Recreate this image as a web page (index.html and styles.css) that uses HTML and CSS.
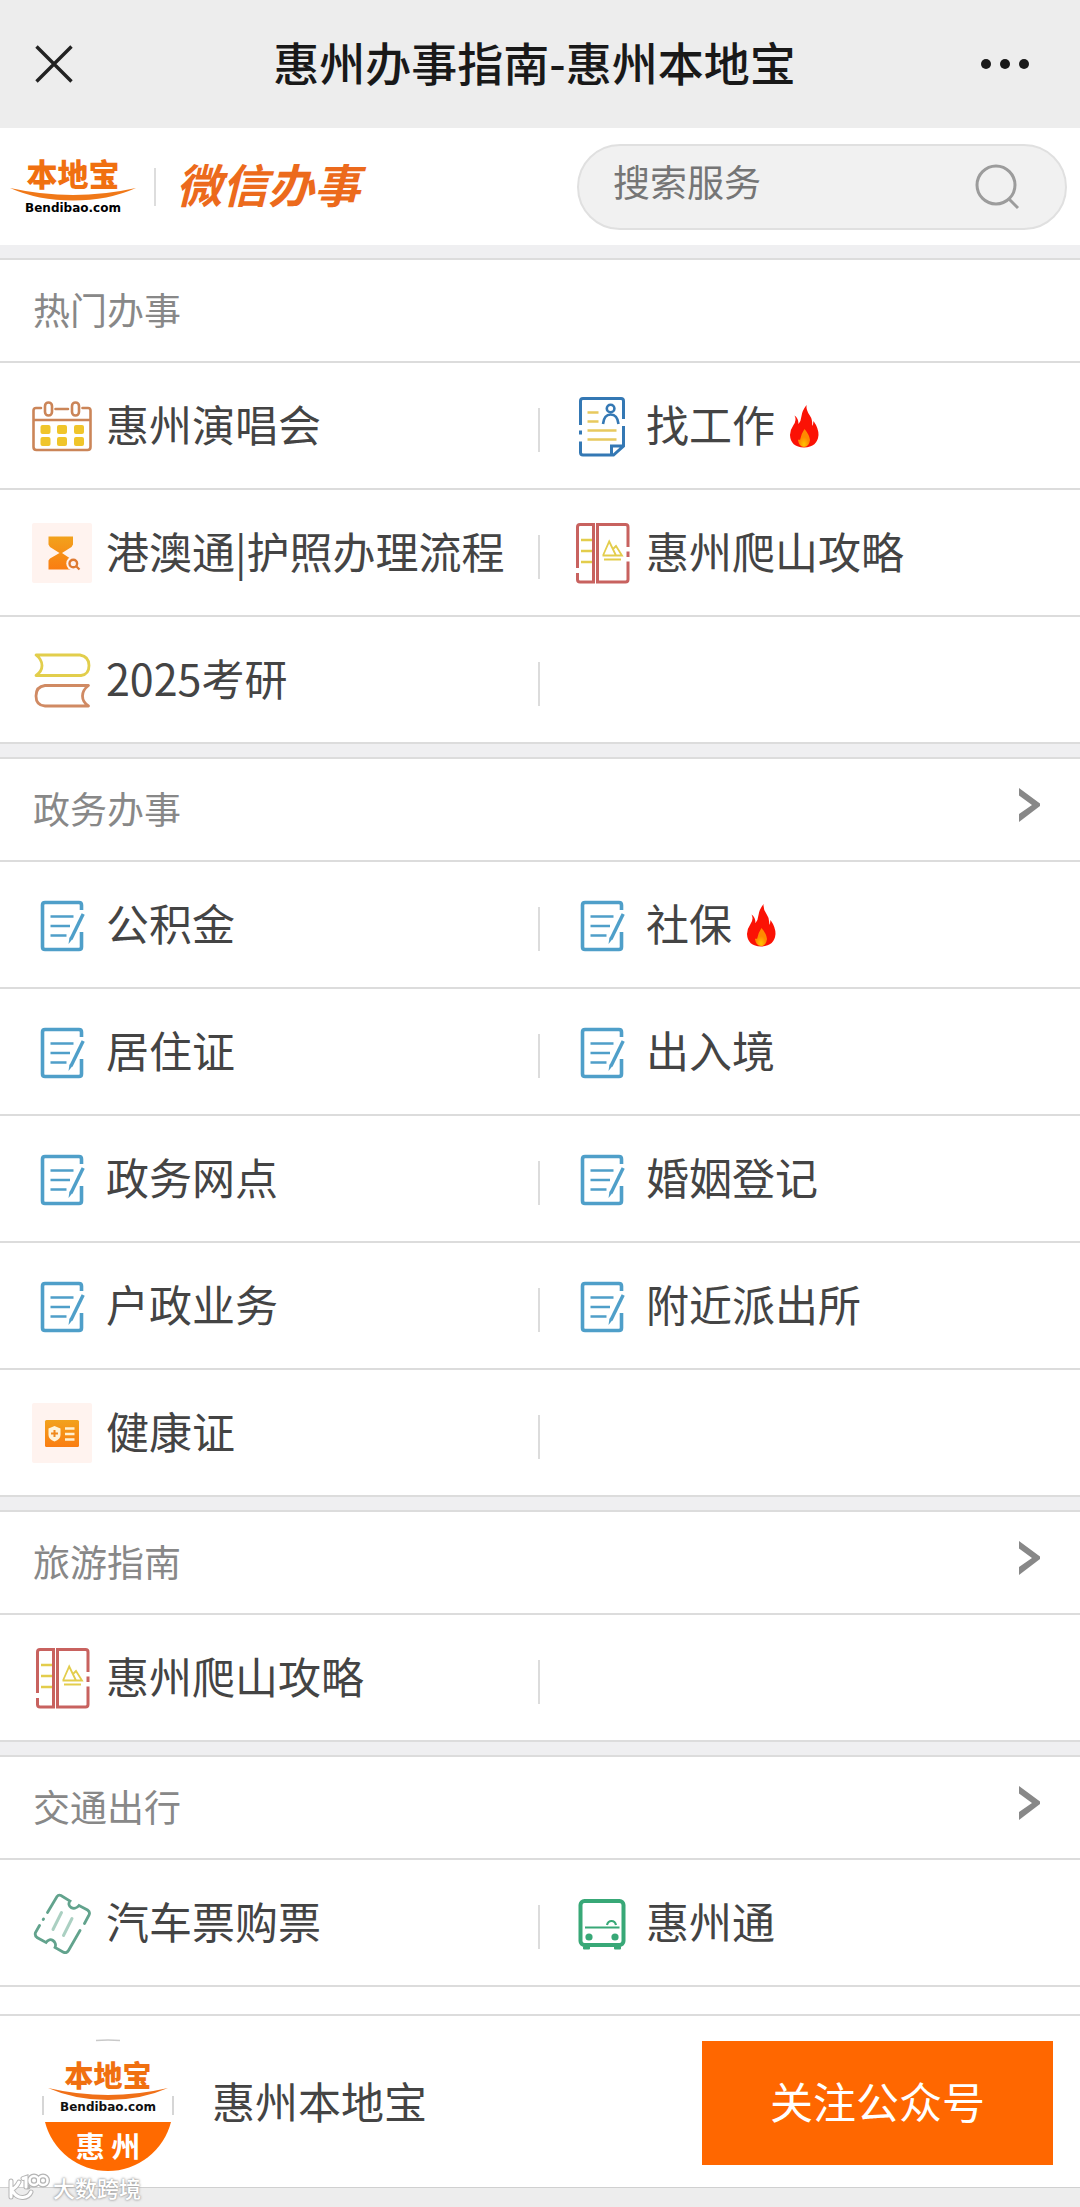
FILE: index.html
```html
<!DOCTYPE html>
<html lang="zh-CN">
<head>
<meta charset="utf-8">
<meta name="viewport" content="width=device-width">
<title>惠州办事指南-惠州本地宝</title>
<link rel="stylesheet" href="styles.css">
</head>
<body>
<svg class="defs" aria-hidden="true">
  <defs>
    <linearGradient id="amber" x1="0" y1="0" x2="0" y2="1">
      <stop offset="0" stop-color="#f2a21c"/>
      <stop offset="1" stop-color="#fa7d12"/>
    </linearGradient>
    <radialGradient id="flame" cx=".5" cy=".85" r=".4">
      <stop offset="0" stop-color="#ffc400"/>
      <stop offset="1" stop-color="#ff8a00"/>
    </radialGradient>
    <symbol id="i-calendar" viewBox="0 0 62 62">
      <g fill="none" stroke="#cb8558" stroke-width="2.6" stroke-linecap="round">
        <path d="M11 13H6q-2.500 0-2.500 2.500V52q0 3 3 3H57.500q3 0 3-3V15.500q0-2.500-2.500-2.500H52.500M25.500 14H38M3.500 25H60.500"/>
        <rect x="15" y="7.500" width="7" height="13" rx="3.500"/>
        <rect x="42" y="7.500" width="7" height="13" rx="3.500"/>
      </g>
      <g fill="#f0c52a">
        <rect x="10.500" y="30" width="10" height="9" rx="2"/><rect x="27" y="30" width="10" height="9" rx="2"/><rect x="44" y="30" width="10" height="9" rx="2"/>
        <rect x="10.500" y="42" width="10" height="9" rx="2"/><rect x="27" y="42" width="10" height="9" rx="2"/><rect x="44" y="42" width="10" height="9" rx="2"/>
      </g>
    </symbol>
    <symbol id="i-hourglass" viewBox="0 0 62 62">
      <rect x="2" y="1" width="60" height="60" rx="2" fill="#fff3ef"/>
      <path fill="url(#amber)" d="M18.500 14.500H43V22.500L41.500 25L32 31L41 37L43 39V47.500H18.500V38.500L20 36.500L29.500 31L20 25L18.500 22.500Z"/>
      <circle cx="43.300" cy="41.500" r="7" fill="#fff3ef"/>
      <circle cx="43.300" cy="41.500" r="3.800" fill="none" stroke="#de7a32" stroke-width="2.400"/>
      <path d="M46.500 44.500L49.500 47.500" stroke="#de7a32" stroke-width="2.200"/>
    </symbol>
    <symbol id="i-books" viewBox="0 0 62 62" fill="none" stroke-width="2.800" stroke-linejoin="round">
      <path stroke="#e2ce4c" d="M6 6H50Q59 7.500 59 16.500T51 26.500H6Q12 22.500 12 16.500T6 6Z"/>
      <path stroke="#d08a63" d="M58.500 36.500H15Q6 37.500 6 47T15 57H58.500Q52.500 53 52.500 47T58.500 36.500Z"/>
    </symbol>
    <symbol id="i-resume" viewBox="0 0 62 62" fill="none" stroke-width="3">
      <g stroke="#3478b4">
        <path d="M10.500 30V6Q10.500 3.500 13 3.500H51Q53.500 3.500 53.500 6V24M53.500 31V51L43.500 60H13Q10.500 60 10.500 57.500V46.500M10.500 35.500V39.500M41.500 60V51H53.500"/>
        <circle cx="40.600" cy="13.500" r="3.800" stroke-width="2.600"/>
        <path stroke-width="2.600" d="M33 29Q34 19.500 40.700 19.500T48.500 29"/>
      </g>
      <path stroke="#e8c95e" stroke-width="2.600" d="M17.500 17.500H28.500M17.500 26.500H28.500M17.500 35.500H46.500M17.500 44.500H46.500"/>
    </symbol>
    <symbol id="i-climb" viewBox="0 0 62 62" fill="none" stroke-width="3">
      <path stroke="#c8625f" d="M7.500 46V5Q7.500 2.500 10 2.500H23.500V60H10Q7.500 60 7.500 57.500V51M58 25V5Q58 2.500 55.500 2.500H27.500V60H55.500Q58 60 58 57.500V39.500M58 29.500V35"/>
      <path stroke="#e3cd4c" stroke-width="2.400" d="M11 18H22M11 29H22M11 40H22"/>
      <path stroke="#e3cd4c" stroke-width="1.800" d="M33 33.500L39.200 19.500L46 33.500M43 27L46 24L52 33.500H32.500M34 37.500H51"/>
    </symbol>
    <symbol id="i-note" viewBox="0 0 62 62" fill="none" stroke="#4f9fc9">
      <path stroke-width="3.600" d="M51.500 16V11Q51.500 8.500 49 8.500H15Q12.500 8.500 12.500 11V53Q12.500 55.500 15 55.500H49Q51.500 55.500 51.500 53V38"/>
      <path stroke-width="2.400" d="M20.500 22.500H43.500M20.500 32H40M20.500 41.500H36.500"/>
      <path stroke-width="3.400" d="M53.200 20L41 45"/>
      <path fill="#4f9fc9" stroke="none" d="M39.500 43.500L42.500 45L38.500 50Z"/>
    </symbol>
    <symbol id="i-health" viewBox="0 0 62 62">
      <rect x="2" y="1" width="60" height="60" rx="2" fill="#fff3ef"/>
      <rect x="15" y="18" width="34" height="27" rx="1.500" fill="url(#amber)"/>
      <path fill="#fff3d8" d="M24.500 24L30.500 26.500V33Q30.500 37 24.500 39.500Q18.500 37 18.500 33V26.500Z"/>
      <path stroke="#f08a1c" stroke-width="2" d="M24.500 28V35M21 31.500H28"/>
      <path stroke="#fff0d0" stroke-width="2.400" d="M35 26.500H44.500M35 32H44.500M35 37.500H44.500"/>
    </symbol>
    <symbol id="i-ticket" viewBox="0 0 62 62" fill="none" stroke-linecap="round">
      <path stroke="#62a38d" stroke-width="2.800" d="M17.500 20.500L27 4.500Q28.500 2.500 31 3.500L40 9C36 14 44 20 49 13.500L57.500 18Q60.500 20 59 23L54.500 31.500M50 38.500L38.500 58.500Q36.500 62 33 60L25 55.500C27.500 50 20 44 16 50.500L7 45.500Q4.500 43.500 5.500 40.500L9.500 33.500M13.200 27.500L13.500 27"/>
      <path stroke="#abd0c2" stroke-width="3" d="M31.500 20.500L23 37.500M42 26.500L33.500 43.500"/>
    </symbol>
    <symbol id="i-bus" viewBox="0 0 62 62" fill="none" stroke="#38a877">
      <rect x="10.500" y="9" width="43" height="44" rx="4" stroke-width="4"/>
      <path stroke-width="2.200" d="M15 35.500H49.500M37 33Q38 29 41.500 29T46 33"/>
      <g fill="#38a877" stroke="none"><circle cx="19" cy="45" r="3.600"/><circle cx="45" cy="45" r="3.600"/><rect x="13" y="54" width="7" height="3.500" rx="1"/><rect x="44" y="54" width="7" height="3.500" rx="1"/></g>
    </symbol>
    <symbol id="i-fire" viewBox="0 0 30 44">
      <path fill="#fb1205" d="M17.500 1Q17 6 20.500 11T23 22Q24.500 20 24.500 17Q29.500 24 29.500 31Q28.500 43 15 43.500Q1.500 43 1 31Q1 26 4.500 21T5.500 11.500Q9.500 14 9.500 20Q12 17 12.500 12T17.500 1Z"/>
      <path fill="url(#flame)" d="M15.500 25Q20.500 31 21 36Q20 43 15 43Q10 43 9 36Q10 35 11 36Q12 30 15.500 25Z"/>
    </symbol>
    <symbol id="i-chevron" viewBox="0 0 21 34"><path fill="#888" d="M0 0L21 15.500V18L0 34V26L13 17L0 7.500Z"/></symbol>
    <symbol id="i-swoosh" viewBox="0 0 126 13"><path fill="#f07818" d="M0 0Q63 14 126 0Q98 12.500 63 12.500T0 0Z"/></symbol>
  </defs>
</svg>

<header class="topbar">
  <button class="icon-btn" type="button" aria-label="关闭"><svg width="38" height="38" viewBox="0 0 38 38"><path d="M1.500 1.500L36.500 36.500M36.500 1.500L1.500 36.500" stroke="#222" stroke-width="3.400"/></svg></button>
  <h1 class="topbar-title">惠州办事指南-惠州本地宝</h1>
  <button class="icon-btn" type="button" aria-label="更多"><svg width="50" height="10" viewBox="0 0 50 10" fill="#191919"><circle cx="6" cy="5" r="5"/><circle cx="25" cy="5" r="5"/><circle cx="44" cy="5" r="5"/></svg></button>
</header>

<div class="brandbar">
  <a class="brand" href="#">
    <span class="brand-cn">本地宝</span>
    <svg class="brand-swoosh"><use href="#i-swoosh"/></svg>
    <span class="brand-en">Bendibao.com</span>
  </a>
  <span class="brand-slogan">微信办事</span>
  <form class="search">
    <input class="search-input" type="text" placeholder="搜索服务" aria-label="搜索服务">
    <button class="icon-btn" type="button" aria-label="搜索"><svg width="46" height="46" viewBox="0 0 46 46" fill="none" stroke="#9c9c9c" stroke-width="3"><circle cx="21" cy="21" r="19"/><path d="M34 35L43 44"/></svg></button>
  </form>
</div>

<main>
  <section class="section">
    <h2 class="section-head">热门办事</h2>
    <div class="grid">
      <a class="cell" href="#"><svg class="icon"><use href="#i-calendar"/></svg><span class="label">惠州演唱会</span></a>
      <a class="cell" href="#"><svg class="icon"><use href="#i-resume"/></svg><span class="label">找工作</span><svg class="fire"><use href="#i-fire"/></svg></a>
      <a class="cell" href="#"><svg class="icon"><use href="#i-hourglass"/></svg><span class="label">港澳通|护照办理流程</span></a>
      <a class="cell" href="#"><svg class="icon"><use href="#i-climb"/></svg><span class="label">惠州爬山攻略</span></a>
      <a class="cell" href="#"><svg class="icon"><use href="#i-books"/></svg><span class="label">2025考研</span></a>
      <span class="cell"></span>
    </div>
  </section>

  <section class="section">
    <h2 class="section-head">政务办事<a class="more" href="#" aria-label="更多政务办事"><svg class="chevron"><use href="#i-chevron"/></svg></a></h2>
    <div class="grid">
      <a class="cell" href="#"><svg class="icon"><use href="#i-note"/></svg><span class="label">公积金</span></a>
      <a class="cell" href="#"><svg class="icon"><use href="#i-note"/></svg><span class="label">社保</span><svg class="fire"><use href="#i-fire"/></svg></a>
      <a class="cell" href="#"><svg class="icon"><use href="#i-note"/></svg><span class="label">居住证</span></a>
      <a class="cell" href="#"><svg class="icon"><use href="#i-note"/></svg><span class="label">出入境</span></a>
      <a class="cell" href="#"><svg class="icon"><use href="#i-note"/></svg><span class="label">政务网点</span></a>
      <a class="cell" href="#"><svg class="icon"><use href="#i-note"/></svg><span class="label">婚姻登记</span></a>
      <a class="cell" href="#"><svg class="icon"><use href="#i-note"/></svg><span class="label">户政业务</span></a>
      <a class="cell" href="#"><svg class="icon"><use href="#i-note"/></svg><span class="label">附近派出所</span></a>
      <a class="cell" href="#"><svg class="icon"><use href="#i-health"/></svg><span class="label">健康证</span></a>
      <span class="cell"></span>
    </div>
  </section>

  <section class="section">
    <h2 class="section-head">旅游指南<a class="more" href="#" aria-label="更多旅游指南"><svg class="chevron"><use href="#i-chevron"/></svg></a></h2>
    <div class="grid">
      <a class="cell" href="#"><svg class="icon"><use href="#i-climb"/></svg><span class="label">惠州爬山攻略</span></a>
      <span class="cell"></span>
    </div>
  </section>

  <section class="section">
    <h2 class="section-head">交通出行<a class="more" href="#" aria-label="更多交通出行"><svg class="chevron"><use href="#i-chevron"/></svg></a></h2>
    <div class="grid">
      <a class="cell" href="#"><svg class="icon"><use href="#i-ticket"/></svg><span class="label">汽车票购票</span></a>
      <a class="cell" href="#"><svg class="icon"><use href="#i-bus"/></svg><span class="label">惠州通</span></a>
    </div>
  </section>
</main>

<footer class="follow">
  <svg class="avatar" viewBox="0 -3 132 136" role="img" aria-label="惠州本地宝">
    <path fill="#ff6a00" d="M3 84H129A65 65 0 0 1 3 84Z"/>
    <path fill="none" stroke="#c9c9c9" stroke-width="1.500" d="M54 2.500Q66 1.500 78 2.500M1 58V77M131 58V77"/>
    <text class="avatar-cn" x="66" y="49">本地宝</text>
    <path fill="#f07018" d="M6 50Q66 64 126 50Q99 62 66 62T6 50Z"/>
    <text class="avatar-en" x="66" y="73">Bendibao.com</text>
    <text class="avatar-city" x="66" y="120">惠 州</text>
  </svg>
  <span class="label follow-name">惠州本地宝</span>
  <button class="follow-btn" type="button"><span class="label">关注公众号</span></button>
</footer>

<div class="watermark">
  <svg width="43" height="28" viewBox="0 0 43 28" fill="none" stroke-linecap="round">
    <path d="M3 8V24M3 17Q8 15 11 9M4 17Q8 25 15 24.500Q21 24 23 19M15 5.500L18 4.500V14M18 14H20" stroke="#b5b5b5" stroke-width="5"/>
    <g stroke="#b5b5b5" stroke-width="5"><circle cx="26" cy="7.500" r="4.500"/><circle cx="35" cy="7.500" r="4.500"/></g>
    <path d="M3 8V24M3 17Q8 15 11 9M4 17Q8 25 15 24.500Q21 24 23 19M15 5.500L18 4.500V14" stroke="#fff" stroke-width="3"/>
    <g stroke="#fff" stroke-width="2.500"><circle cx="26" cy="7.500" r="4.500"/><circle cx="35" cy="7.500" r="4.500"/></g>
  </svg>
  <span>大数跨境</span>
</div>
</body>
</html>
```

FILE: styles.css
```css
* {
  box-sizing: border-box;
}

body {
  position: relative;
  margin: 0;
  padding-bottom: 19px;
  background: #ededed;
  color: #444;
  font-family: "Noto Sans CJK SC", sans-serif;
  font-size: 43px;
  line-height: 60px;
}

a {
  color: inherit;
  text-decoration: none;
}

svg {
  display: block;
  flex: none;
}

.defs {
  position: absolute;
  width: 0;
  height: 0;
}

.icon-btn {
  flex: none;
  padding: 0;
  border: 0;
  background: none;
}

/* Top bar */
.topbar {
  display: flex;
  align-items: center;
  justify-content: space-between;
  height: 128px;
  padding: 0 50px 0 35px;
  background: #ededed;
}

.topbar-title {
  margin: 0;
  padding: 0 0 6px 16px;
  color: #191919;
  font-size: 46px;
  font-weight: 500;
}

/* Brand and search */
.brandbar {
  display: flex;
  align-items: center;
  height: 117px;
  padding: 0 13px 0 9px;
  background: #fff;
}

.brand {
  display: flex;
  flex-direction: column;
  align-items: center;
  width: 128px;
}

.brand-cn {
  color: #f07010;
  font-size: 31px;
  font-weight: 900;
  line-height: 30px;
}

.brand-swoosh {
  width: 126px;
  height: 13px;
}

.brand-en {
  color: #000;
  font-family: "DejaVu Sans", sans-serif;
  font-size: 12px;
  font-weight: 700;
  line-height: 14px;
}

.brand-slogan {
  margin-left: 17px;
  padding: 0 0 8px 20px;
  border-left: 2px solid #ddd;
  color: #ec6a1c;
  font-size: 46px;
  font-style: italic;
  font-weight: 700;
  line-height: 30px;
}

.search {
  display: flex;
  align-items: center;
  width: 490px;
  height: 86px;
  margin-left: auto;
  padding: 0 44px 0 34px;
  border: 2px solid #e0e0e0;
  border-radius: 43px;
  background: #f1f1f1;
}

.search-input {
  flex: 1;
  min-width: 0;
  padding: 0 0 12px;
  border: 0;
  outline: 0;
  background: none;
  color: #444;
  font: inherit;
  font-size: 37px;
}

.search-input::placeholder {
  color: #757575;
  opacity: 1;
}

/* Sections */
main {
  padding-bottom: 27px;
  background: #fff;
}

.section {
  border-top: 13px solid #efeff1;
}

.section-head {
  display: flex;
  align-items: center;
  justify-content: space-between;
  height: 105px;
  margin: 0;
  padding: 0 40px 4px 33px;
  border-top: 2px solid #dcdcdc;
  border-bottom: 2px solid #dcdcdc;
  color: #888;
  font-size: 37px;
  font-weight: 400;
}

.more {
  padding-bottom: 6px;
}

.chevron {
  width: 21px;
  height: 34px;
}

.grid {
  display: grid;
  grid-template-columns: 1fr 1fr;
}

.cell {
  display: flex;
  align-items: center;
  height: 127px;
  padding-left: 30px;
  border-bottom: 2px solid #dcdcdc;
  white-space: nowrap;
}

.cell:nth-child(odd)::after {
  content: "";
  width: 2px;
  height: 44px;
  margin: 8px 0 0 auto;
  background: #dcdcdc;
}

.label {
  display: block;
  padding-bottom: 6px;
}

.icon {
  width: 62px;
  height: 62px;
  margin-right: 14px;
}

.fire {
  width: 30px;
  height: 44px;
  margin-left: 14px;
}

/* Follow bar */
.follow {
  display: flex;
  align-items: center;
  height: 174px;
  padding: 3px 27px 0 42px;
  border-top: 2px solid #dcdcdc;
  border-bottom: 1px solid #d0d0d0;
  background: #fff;
}

.avatar {
  width: 132px;
  height: 136px;
}

.avatar text {
  text-anchor: middle;
}

.avatar-cn {
  fill: #f07010;
  font-size: 29px;
  font-weight: 900;
}

.avatar-en {
  fill: #111;
  font-family: "DejaVu Sans", sans-serif;
  font-size: 12px;
  font-weight: 700;
}

.avatar-city {
  fill: #fff;
  font-size: 29px;
  font-weight: 700;
}

.follow-name {
  margin-left: 38px;
}

.follow-btn {
  width: 351px;
  height: 124px;
  margin-left: auto;
  padding: 0;
  border: 0;
  background: #ff6700;
  color: #fff;
  font: inherit;
}

/* Watermark laid over the page corner */
.watermark {
  position: absolute;
  left: 8px;
  bottom: 6px;
  display: flex;
  align-items: center;
  gap: 2px;
  color: #fff;
  font-size: 22px;
  font-weight: 500;
  line-height: 28px;
  text-shadow: 0 0 2px #999, 0 0 3px #999;
}
```
